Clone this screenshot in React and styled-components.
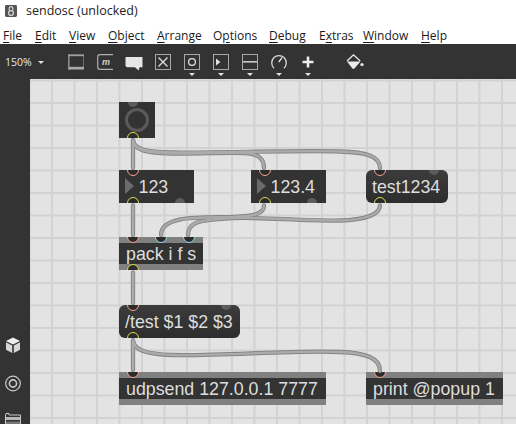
import React from "react";
import styled, { createGlobalStyle } from "styled-components";

const GlobalStyle = createGlobalStyle`
  html, body {
    margin: 0;
    padding: 0;
    background: #fff;
    overflow: hidden;
  }
`;
const Page = styled.div`
  width: 516px;
  height: 424px;
  display: flex;
  flex-direction: column;
  overflow: hidden;
  font-family: "Open Sans", "Noto Sans", sans-serif;
`;
const TitleBar = styled.div`
  height: 22px;
  display: flex;
  align-items: center;
  gap: 9px;
  padding: 0 0 1px 5px;
  box-sizing: border-box;
  font-size: 12.5px;
  color: #222;
`;
const MenuBar = styled.div`
  height: 22px;
  display: flex;
  align-items: center;
  padding: 4px 0 0 3px;
  box-sizing: border-box;
  font-size: 12px;
  color: #1a1a1a;
  u {
    text-underline-offset: 2px;
  }
`;
const MenuItem = styled.span`
  width: ${(props) => props.$width}px;
  flex: none;
`;
const Toolbar = styled.div`
  height: 35px;
  background: #333;
  display: flex;
  padding: 10px 0 0 5px;
  box-sizing: border-box;
  flex: none;
`;
const ZoomLabel = styled.div`
  width: 63px;
  height: 16px;
  display: flex;
  align-items: center;
  gap: 6px;
  font-size: 10.5px;
  color: #e6e6e6;
`;
const Tools = styled.div`
  display: flex;
  gap: 13px;
`;
const Tool = styled.div`
  width: 16px;
  margin-left: ${(props) => props.$shift || 0}px;
  display: flex;
  flex-direction: column;
  align-items: center;
  gap: 3px;
  svg {
    flex: none;
    display: block;
    overflow: visible;
  }
`;
const Caret = styled.div`
  width: 0;
  height: 0;
  flex: none;
  border-left: 3.5px solid transparent;
  border-right: 3.5px solid transparent;
  border-top: 3.5px solid #e0e0e0;
`;
const Workspace = styled.div`
  flex: 1;
  display: flex;
  min-height: 0;
`;
const Sidebar = styled.div`
  width: 30px;
  flex: none;
  background: #333;
  box-sizing: border-box;
  padding: 258px 0 0 5px;
  display: flex;
  flex-direction: column;
  gap: 21px;
  svg {
    display: block;
    flex: none;
  }
`;
const Canvas = styled.div`
  flex: 1;
  position: relative;
  overflow: hidden;
  background-color: #e3e3e3;
  background-image: linear-gradient(to right, #d2d2d2 1.6px, transparent 1.6px),
    linear-gradient(to bottom, #d2d2d2 1.6px, transparent 1.6px);
  background-size: 22.5px 22.5px;
  background-position: 21px 0.5px;
`;
const Node = styled.div`
  position: absolute;
  left: ${(props) => props.$x}px;
  top: ${(props) => props.$y}px;
  width: ${(props) => props.$w}px;
  height: 33px;
  box-sizing: border-box;
  overflow: hidden;
  background: #333;
  color: #dedede;
  font-family: "Liberation Sans", Arial, sans-serif;
  font-size: 17.8px;
  line-height: 34px;
  white-space: nowrap;
  padding-left: 7px;
`;
const ObjectBox = styled(Node)`
  background: linear-gradient(
    #808080 6px,
    #333 6px,
    #333 27px,
    #808080 27px
  );
`;
const MessageBox = styled(Node)`
  background: linear-gradient(#3c3c3c, #2d2d2d);
  border-radius: 6px;
  padding-left: 6px;
`;
const NumberBox = styled(Node)`
  padding-left: 19.5px;
`;
const Triangle = styled.div`
  position: absolute;
  left: 6px;
  top: 8px;
  width: 0;
  height: 0;
  border-left: 9.5px solid #6b6b6b;
  border-top: 8.5px solid transparent;
  border-bottom: 8.5px solid transparent;
`;
const ButtonBox = styled(Node)`
  height: 36px;
  padding: 0;
`;
const ButtonRing = styled.div`
  position: absolute;
  left: 6px;
  top: 6px;
  width: 24px;
  height: 24px;
  box-sizing: border-box;
  border: 3px solid #5a5a5a;
  border-radius: 50%;
`;
const portColors = {
  inlet: "#f5a592",
  cold: "#8adcf2",
  outlet: "#dcdc4e",
};
const Port = styled.div`
  position: absolute;
  left: ${(props) => props.$x - 6}px;
  ${(props) => (props.$kind === "outlet" ? "bottom" : "top")}: -6px;
  width: 12px;
  height: 12px;
  box-sizing: border-box;
  border-radius: 50%;
  border: 1.7px solid ${(props) => portColors[props.$kind]};
  background: #2b2b2b;
`;
const Dot = styled.div`
  position: absolute;
  left: ${(props) => props.$x - 5}px;
  ${(props) => (props.$bottom ? "bottom" : "top")}: -5px;
  width: 10px;
  height: 10px;
  border-radius: 50%;
  background: #5c5c5c;
`;
const CordLayer = styled.svg`
  position: absolute;
  left: 0;
  top: 0;
  width: 486px;
  height: 345px;
  pointer-events: none;
  fill: none;
  stroke-linecap: round;
`;

const cords = [
  "M133 140.5 L133 168",
  "M133 140.5 C134 150 146 153 172 153.5 C200 154 225 152 244 153 C258 153.5 264 158 264 168",
  "M133 140.5 C134 149 146 152 172 152.5 C220 153 300 150 340 151.5 C366 152 380 156 380 168",
  "M133 205.5 L133 235",
  "M264 205.5 C264 214 254 216 234 217 C205 218 161 214 161 235",
  "M380 205.5 C380 214 366 220 340 220.5 C300 221 250 216 225 218.5 C200 220 188 222 188 235",
  "M133 272.5 L133 303",
  "M133 340.5 L133 370",
  "M133 340.5 C134 350 146 354 172 355 C225 356 290 350 340 352 C366 353 380 358 380 371",
];

function Cords() {
  return (
    <CordLayer viewBox="30 79 486 345">
      {cords.map((d) => (
        <path key={d} d={d} stroke="#858585" strokeWidth="4.3" />
      ))}
      {cords.map((d) => (
        <path key={d} d={d} stroke="#ababab" strokeWidth="2.4" />
      ))}
    </CordLayer>
  );
}

function TitleIcon() {
  return (
    <svg width="12" height="12" viewBox="0 0 13 13">
      <rect width="13" height="13" rx="1.5" fill="#555" />
      <path d="M4.5 6V3.8a2 2 0 0 1 4 0V6" fill="none" stroke="#ddd" strokeWidth="1.2" />
      <circle cx="6.5" cy="8.8" r="2.6" fill="none" stroke="#ddd" strokeWidth="1.3" />
    </svg>
  );
}

const Frame = () => <rect x="0.5" y="0.5" width="15" height="15" fill="none" stroke="#a8a8a8" />;

const ObjectIcon = () => (
  <svg width="16" height="16" viewBox="0 0 16 16">
    <rect x="0.5" y="0.5" width="15" height="15" fill="none" stroke="#6e6e6e" />
    <rect x="0" y="0" width="1.6" height="16" fill="#8a8a8a" />
    <rect x="1" y="0.8" width="15" height="1.4" fill="#a0a0a0" />
    <rect x="1" y="12.8" width="15" height="2.2" fill="#a8a8a8" />
  </svg>
);
const MessageIcon = () => (
  <svg width="16" height="16" viewBox="0 0 16 16">
    <path d="M16 .7H3Q.7.7.7 3V13Q.7 15.3 3 15.3H16" fill="none" stroke="#b0b0b0" strokeWidth="1.2" />
    <text x="5" y="11" fontSize="9" fontStyle="italic" fontWeight="700" fontFamily="Liberation Sans" fill="#d0d0d0">
      m
    </text>
  </svg>
);
const CommentIcon = () => (
  <svg width="16" height="16" viewBox="0 0 16 16">
    <path d="M-.5 3H16.5V13.2H13.5L12.6 16.5L9 13.2H1L-.5 12Z" fill="#e6e6e6" />
  </svg>
);
const ToggleIcon = () => (
  <svg width="16" height="16" viewBox="0 0 16 16">
    <Frame />
    <path d="M3.5 3.5L12.5 12.5M12.5 3.5L3.5 12.5" stroke="#e0e0e0" strokeWidth="1.3" />
  </svg>
);
const ButtonIcon = () => (
  <svg width="16" height="16" viewBox="0 0 16 16">
    <Frame />
    <circle cx="8" cy="8" r="3.4" fill="none" stroke="#e0e0e0" strokeWidth="1.3" />
  </svg>
);
const NumberIcon = () => (
  <svg width="16" height="16" viewBox="0 0 16 16">
    <Frame />
    <path d="M3 4.5L7.5 8L3 11.5Z" fill="#e0e0e0" />
  </svg>
);
const SliderIcon = () => (
  <svg width="16" height="16" viewBox="0 0 16 16">
    <Frame />
    <rect x="1" y="7" width="14" height="1.6" fill="#c8c8c8" />
  </svg>
);
const DialIcon = () => (
  <svg width="16" height="16" viewBox="0 0 16 16">
    <path d="M3 14.2A7.3 7.3 0 1 1 13 14.2" fill="none" stroke="#d8d8d8" strokeWidth="1.3" />
    <path d="M7.8 8L11 3.6" stroke="#e6e6e6" strokeWidth="1.3" />
  </svg>
);
const PlusIcon = () => (
  <svg width="16" height="16" viewBox="0 0 16 16">
    <path d="M8 2.5V13.5M2.5 8H13.5" stroke="#ececec" strokeWidth="2.6" />
  </svg>
);
const BucketIcon = () => (
  <svg width="17" height="16" viewBox="0 0 17 16">
    <path d="M0 7L6.5 .8L13.2 7" fill="none" stroke="#ececec" strokeWidth="1.3" />
    <path d="M0 7.5H13.5L7.2 14.8H5.6Z" fill="#ececec" />
    <circle cx="15" cy="10.6" r="1.7" fill="#e0e0e0" />
  </svg>
);

const CubeIcon = () => (
  <svg width="16" height="17" viewBox="0 0 16 17">
    <path d="M8 .5L15 4L8 7.5L1 4Z" fill="#eee" />
    <path d="M1 5.2L7.2 8.4V16L1 12.8Z" fill="#d6d6d6" />
    <path d="M15 5.2L8.8 8.4V16L15 12.8Z" fill="#d6d6d6" />
  </svg>
);
const TargetIcon = () => (
  <svg width="16" height="17" viewBox="0 0 16 17">
    <circle cx="8" cy="8.5" r="7.3" fill="none" stroke="#c8c8c8" strokeWidth="1.2" />
    <circle cx="8" cy="8.5" r="3.6" fill="none" stroke="#c8c8c8" strokeWidth="1.6" />
  </svg>
);
const FolderIcon = () => (
  <svg width="16" height="12" viewBox="0 0 16 12">
    <path d="M.5 12V2H1V.5H4V2H15.5V12" fill="none" stroke="#c8c8c8" />
    <rect x="1" y="4" width="14" height="3" fill="#b8b8b8" />
    <rect x="1" y="8.5" width="14" height="3.5" fill="#777" />
  </svg>
);

function App() {
  return (
    <Page>
      <GlobalStyle />
      <TitleBar>
        <TitleIcon />
        sendosc (unlocked)
      </TitleBar>
      <MenuBar>
        <MenuItem $width={32}><u>F</u>ile</MenuItem>
        <MenuItem $width={34}><u>E</u>dit</MenuItem>
        <MenuItem $width={39}><u>V</u>iew</MenuItem>
        <MenuItem $width={49}><u>O</u>bject</MenuItem>
        <MenuItem $width={56}><u>A</u>rrange</MenuItem>
        <MenuItem $width={56}>O<u>p</u>tions</MenuItem>
        <MenuItem $width={50}><u>D</u>ebug</MenuItem>
        <MenuItem $width={44}>E<u>x</u>tras</MenuItem>
        <MenuItem $width={58}><u>W</u>indow</MenuItem>
        <MenuItem $width={40}><u>H</u>elp</MenuItem>
      </MenuBar>
      <Toolbar>
        <ZoomLabel>
          150%
          <Caret />
        </ZoomLabel>
        <Tools>
          <Tool><ObjectIcon /></Tool>
          <Tool><MessageIcon /></Tool>
          <Tool><CommentIcon /></Tool>
          <Tool><ToggleIcon /></Tool>
          <Tool><ButtonIcon /><Caret /></Tool>
          <Tool><NumberIcon /><Caret /></Tool>
          <Tool><SliderIcon /><Caret /></Tool>
          <Tool><DialIcon /><Caret /></Tool>
          <Tool><PlusIcon /><Caret /></Tool>
          <Tool $shift={18}><BucketIcon /></Tool>
        </Tools>
      </Toolbar>
      <Workspace>
        <Sidebar>
          <CubeIcon />
          <TargetIcon />
          <FolderIcon />
        </Sidebar>
        <Canvas>
          <ButtonBox $x={89} $y={23} $w={36}>
            <ButtonRing />
            <Dot $x={14} />
            <Port $kind="outlet" $x={14} />
          </ButtonBox>
          <NumberBox $x={89} $y={91} $w={75}>
            <Triangle />
            123
            <Port $kind="inlet" $x={14} />
            <Port $kind="outlet" $x={14} />
            <Dot $x={60.5} $bottom />
          </NumberBox>
          <NumberBox $x={221} $y={91} $w={75}>
            <Triangle />
            123.4
            <Port $kind="inlet" $x={13.5} />
            <Port $kind="outlet" $x={13.5} />
            <Dot $x={60.5} $bottom />
          </NumberBox>
          <MessageBox $x={336} $y={91} $w={82}>
            test1234
            <Port $kind="inlet" $x={14} />
            <Port $kind="outlet" $x={14} />
            <Dot $x={68} />
          </MessageBox>
          <ObjectBox $x={89} $y={158} $w={84}>
            pack i f s
            <Port $kind="inlet" $x={14} />
            <Port $kind="cold" $x={42} />
            <Port $kind="cold" $x={69.5} />
            <Port $kind="outlet" $x={14} />
          </ObjectBox>
          <MessageBox $x={89} $y={226} $w={121}>
            /test $1 $2 $3
            <Port $kind="inlet" $x={14} />
            <Port $kind="outlet" $x={14} />
            <Dot $x={107} />
          </MessageBox>
          <ObjectBox $x={89} $y={293} $w={207}>
            udpsend 127.0.0.1 7777
            <Port $kind="inlet" $x={14} />
          </ObjectBox>
          <ObjectBox $x={336} $y={293} $w={137}>
            print @popup 1
            <Port $kind="inlet" $x={14} />
          </ObjectBox>
          <Cords />
        </Canvas>
      </Workspace>
    </Page>
  );
}

export default App;
